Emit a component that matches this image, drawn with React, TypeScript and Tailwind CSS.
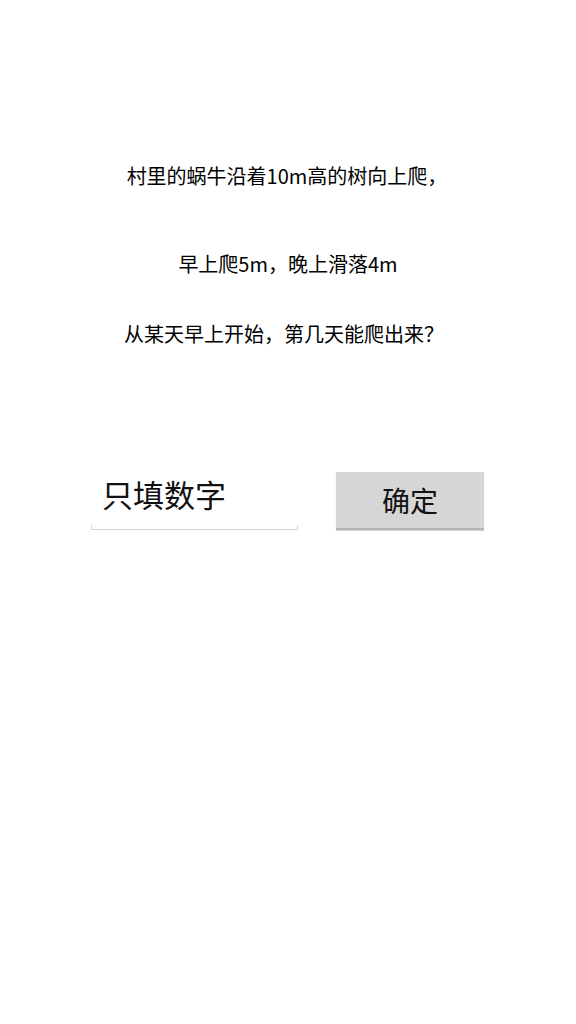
export default function App() {
  return (
    <div
      className="w-[576px] h-[1024px] bg-white text-black flex flex-col"
      style={{ fontFamily: '"Noto Sans CJK SC", "Noto Sans", sans-serif' }}
    >
      {/* Question */}
      <div className="pt-[162px] flex flex-col items-center text-[20px] leading-[28px]">
        <p className="pr-[2px]">村里的蜗牛沿着10m高的树向上爬，</p>
        <p className="mt-[60px]">早上爬5m，晚上滑落4m</p>
        <p className="mt-[42px] pr-[8px]">从某天早上开始，第几天能爬出来？</p>
      </div>

      {/* Answer row */}
      <div className="mt-[124px] flex items-start">
        <div className="ml-[91px] w-[207px] h-[58px] relative">
          <div className="pl-[11px] text-[31px] leading-[44px] text-[#111]">只填数字</div>
          <div className="absolute left-0 right-0 top-[57px] h-[1px] bg-[#d4d4d4]" />
          <div className="absolute left-0 top-[53px] w-[1px] h-[5px] bg-[#d4d4d4]" />
          <div className="absolute right-0 top-[53px] w-[1px] h-[5px] bg-[#d4d4d4]" />
        </div>
        <button className="ml-[38px] w-[148px] h-[58px] bg-[#d6d6d6] border-b-2 border-[#b5b5b5] shadow-[0_1px_1px_rgba(0,0,0,0.15)] flex items-center justify-center text-[28px] leading-none text-[#111]">
          确定
        </button>
      </div>
    </div>
  );
}
